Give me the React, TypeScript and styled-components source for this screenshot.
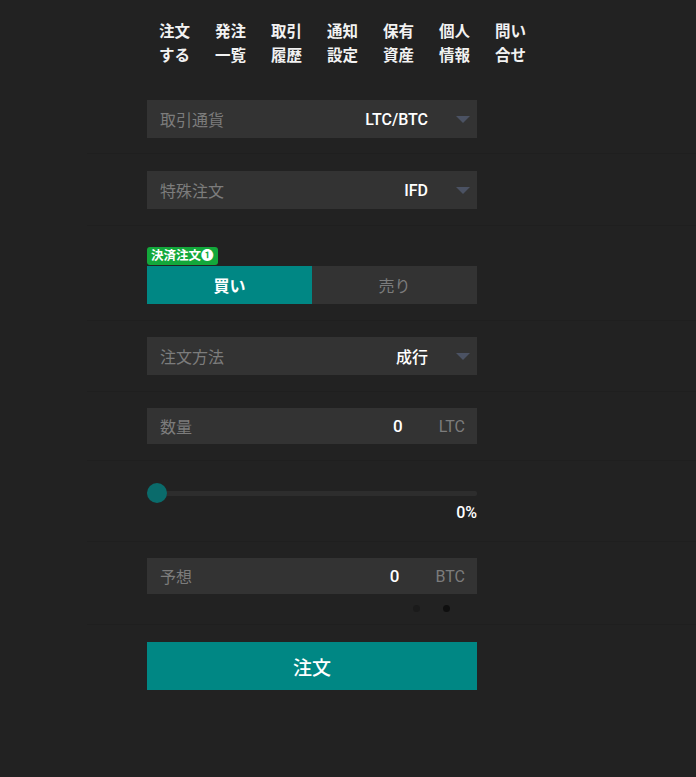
import React from "react";
import styled, { createGlobalStyle } from "styled-components";

const Global = createGlobalStyle`
  html, body { margin: 0; padding: 0; background: #222222; }
  body {
    font-family: "Liberation Sans", "Noto Sans CJK JP", sans-serif;
    -webkit-font-smoothing: antialiased;
  }
`;

const latin = `"Roboto", "Noto Sans CJK JP", sans-serif`;

const Page = styled.div`
  min-height: 777px;
  background: #222222;
  overflow: hidden;
`;

const Nav = styled.nav`
  display: flex;
  gap: 24px;
  padding: 20px 0 16px 159px;
`;

const NavItem = styled.a`
  display: flex;
  flex-direction: column;
  width: 32px;
  color: #f2f2f2;
  font-size: 15.5px;
  font-weight: 700;
  line-height: 24px;
  white-space: nowrap;
  text-decoration: none;
`;

const Section = styled.section<{ $top?: number; $bottom?: number }>`
  margin-left: 87px;
  padding: ${(p) => p.$top ?? 16}px 0 ${(p) => p.$bottom ?? 16}px 60px;
  border-bottom: 1px solid #1f1f1f;
`;

const LastSection = styled(Section)`
  border-bottom: none;
`;

const Column = styled.div`
  width: 330px;
  display: flex;
  flex-direction: column;
`;

const Field = styled.div<{ $h?: number }>`
  height: ${(p) => p.$h ?? 38}px;
  background: #333333;
  display: flex;
  align-items: center;
  padding: 0 12px 0 13px;
  box-sizing: border-box;
`;

const Label = styled.span`
  flex: 1;
  color: #7c7c7c;
  font-size: 16px;
`;

const SelectValue = styled.span`
  font-family: ${latin};
  color: #ffffff;
  font-size: 16px;
  font-weight: 500;
  margin-right: 28px;
`;

const Caret = styled.span`
  width: 0;
  height: 0;
  border-left: 7px solid transparent;
  border-right: 7px solid transparent;
  border-top: 7px solid #4b5263;
  margin-right: -5px;
`;

const NumberValue = styled.span`
  font-family: ${latin};
  color: #ffffff;
  font-size: 17px;
  font-weight: 500;
  margin-right: 36px;
`;

const Unit = styled.span`
  font-family: ${latin};
  color: #7c7c7c;
  font-size: 16px;
`;

const Badge = styled.span`
  align-self: flex-start;
  background: #13a83b;
  color: #ffffff;
  font-size: 12.5px;
  font-weight: 700;
  line-height: 18px;
  height: 18px;
  padding: 0 4px 0 4px;
  border-radius: 3px;
  margin-bottom: 1px;
`;

const Toggle = styled.div`
  display: grid;
  grid-template-columns: 1fr 1fr;
  height: 38px;
`;

const ToggleButton = styled.button<{ $active?: boolean }>`
  border: none;
  margin: 0;
  padding: 0;
  font-family: inherit;
  font-size: 16px;
  font-weight: ${(p) => (p.$active ? 700 : 400)};
  color: ${(p) => (p.$active ? "#ffffff" : "#7c7c7c")};
  background: ${(p) => (p.$active ? "#008784" : "#333333")};
`;

const SliderWrap = styled.div`
  position: relative;
  height: 26px;
`;

const Track = styled.div`
  position: absolute;
  left: 0;
  right: 0;
  top: 14px;
  height: 5px;
  background: #2d2d2d;
  border-radius: 2px;
`;

const Thumb = styled.div`
  position: absolute;
  left: 0;
  top: 6px;
  width: 20px;
  height: 20px;
  border-radius: 50%;
  background: #0a6b6b;
`;

const Percent = styled.div`
  font-family: ${latin};
  text-align: right;
  color: #ffffff;
  font-size: 16px;
  font-weight: 500;
  line-height: 20px;
`;

const Dots = styled.div`
  display: flex;
  justify-content: flex-end;
  gap: 23px;
  margin-top: 10px;
  padding-right: 27px;
  height: 8px;
  align-items: center;
`;

const Dot = styled.span<{ $dark?: boolean }>`
  width: 7px;
  height: 7px;
  border-radius: 50%;
  background: ${(p) => (p.$dark ? "#0f0f0f" : "#1b1b1b")};
`;

const Submit = styled.button`
  height: 48px;
  width: 330px;
  border: none;
  background: #008784;
  color: #ffffff;
  font-family: inherit;
  font-size: 19px;
  font-weight: 500;
`;

const navItems = [
  ["注文", "する"],
  ["発注", "一覧"],
  ["取引", "履歴"],
  ["通知", "設定"],
  ["保有", "資産"],
  ["個人", "情報"],
  ["問い", "合せ"],
];

export default function App() {
  return (
    <Page>
      <Global />
      <Nav>
        {navItems.map(([a, b]) => (
          <NavItem key={a + b}>
            <span>{a}</span>
            <span>{b}</span>
          </NavItem>
        ))}
      </Nav>

      <Section $top={16} $bottom={15}>
        <Column>
          <Field>
            <Label>取引通貨</Label>
            <SelectValue>LTC/BTC</SelectValue>
            <Caret />
          </Field>
        </Column>
      </Section>

      <Section $top={17} $bottom={16}>
        <Column>
          <Field>
            <Label>特殊注文</Label>
            <SelectValue>IFD</SelectValue>
            <Caret />
          </Field>
        </Column>
      </Section>

      <Section $top={21} $bottom={16}>
        <Column>
          <Badge>決済注文❶</Badge>
          <Toggle>
            <ToggleButton $active>買い</ToggleButton>
            <ToggleButton>売り</ToggleButton>
          </Toggle>
        </Column>
      </Section>

      <Section $top={16} $bottom={16}>
        <Column>
          <Field>
            <Label>注文方法</Label>
            <SelectValue>成行</SelectValue>
            <Caret />
          </Field>
        </Column>
      </Section>

      <Section $top={16} $bottom={16}>
        <Column>
          <Field $h={36}>
            <Label>数量</Label>
            <NumberValue>0</NumberValue>
            <Unit>LTC</Unit>
          </Field>
        </Column>
      </Section>

      <Section $top={16} $bottom={18}>
        <Column>
          <SliderWrap>
            <Track />
            <Thumb />
          </SliderWrap>
          <Percent>0%</Percent>
        </Column>
      </Section>

      <Section $top={16} $bottom={12}>
        <Column>
          <Field $h={36}>
            <Label>予想</Label>
            <NumberValue>0</NumberValue>
            <Unit>BTC</Unit>
          </Field>
          <Dots>
            <Dot />
            <Dot $dark />
          </Dots>
        </Column>
      </Section>

      <LastSection $top={17} $bottom={16}>
        <Column>
          <Submit>注文</Submit>
        </Column>
      </LastSection>
    </Page>
  );
}
